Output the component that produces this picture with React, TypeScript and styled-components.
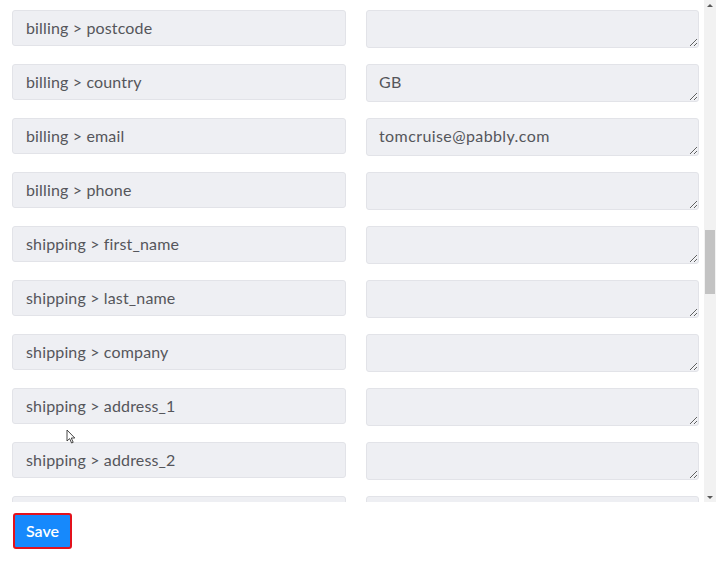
import React, { useEffect, useRef, useState } from "react";
import styled, { createGlobalStyle } from "styled-components";

const GlobalStyle = createGlobalStyle`
  html, body {
    margin: 0;
    padding: 0;
    background: #ffffff;
    font-family: Lato, "Open Sans", "Liberation Sans", sans-serif;
  }
`;

const Page = styled.div`
  position: relative;
  width: 726px;
  height: 577px;
  background: #ffffff;
`;

const ListFrame = styled.div`
  display: flex;
  width: 716px;
  height: 502px;
`;

const ScrollArea = styled.div`
  width: 704px;
  height: 100%;
  overflow: hidden;
`;

const ScrollBar = styled.div`
  width: 12px;
  display: flex;
  flex-direction: column;
  background: #f2f2f2;
`;

const ScrollArrow = styled.div<{ $down?: boolean }>`
  height: 10px;
  display: flex;
  align-items: center;
  justify-content: center;

  &::after {
    content: "";
    width: 0;
    height: 0;
    border-left: 3px solid transparent;
    border-right: 3px solid transparent;
    ${(p) =>
      p.$down ? "border-top: 3px solid #5a5a5a;" : "border-bottom: 3px solid #5a5a5a;"}
  }
`;

const ScrollTrack = styled.div`
  position: relative;
  flex: 1;
`;

const ScrollThumb = styled.div`
  position: absolute;
  left: 1px;
  right: 1px;
  background: #c3c3c3;
`;

const FieldGrid = styled.div`
  display: grid;
  grid-template-columns: 334px 333px;
  column-gap: 20px;
  row-gap: 16px;
  padding: 10px 5px 10px 12px;
  align-items: start;
`;

const KeyBox = styled.div`
  box-sizing: border-box;
  height: 36px;
  padding: 0 13px 1px;
  display: flex;
  align-items: center;
  background: #eeeff3;
  border: 1px solid #e2e3e8;
  border-radius: 3px;
  color: #55565b;
  font-size: 16px;
  letter-spacing: 0.15px;
  white-space: nowrap;
  overflow: hidden;
`;

const ValueArea = styled.textarea`
  box-sizing: border-box;
  display: block;
  width: 333px;
  height: 38px;
  min-height: 38px;
  margin: 0;
  padding: 5px 12px 7px;
  background: #eeeff3;
  border: 1px solid #e2e3e8;
  border-radius: 3px;
  color: #55565b;
  font-family: Lato, "Open Sans", "Liberation Sans", sans-serif;
  font-size: 16px;
  letter-spacing: 0.4px;
  line-height: 24px;
  resize: vertical;
  overflow: hidden;
  outline: none;
`;

const Footer = styled.div`
  display: flex;
  padding: 11px 0 0 13px;
`;

const SaveButton = styled.button`
  box-sizing: border-box;
  height: 36px;
  padding: 0 11px 2px;
  background: #1689fc;
  border: 2px solid #e3121c;
  border-radius: 3px;
  color: #ffffff;
  font-family: Lato, "Open Sans", "Liberation Sans", sans-serif;
  font-size: 16px;
  font-weight: 600;
  cursor: pointer;
`;

const Cursor = styled.svg`
  position: absolute;
  left: 66px;
  top: 429px;
  pointer-events: none;
`;

const fields: [string, string][] = [
  ["id", "1523"],
  ["parent_id", "0"],
  ["number", "1523"],
  ["order_key", ""],
  ["created_via", "checkout"],
  ["version", ""],
  ["status", "processing"],
  ["currency", "GBP"],
  ["date_created", ""],
  ["date_created_gmt", ""],
  ["date_modified", ""],
  ["date_modified_gmt", ""],
  ["discount_total", "0.00"],
  ["discount_tax", "0.00"],
  ["shipping_total", "0.00"],
  ["shipping_tax", "0.00"],
  ["cart_tax", "0.00"],
  ["total", ""],
  ["total_tax", "0.00"],
  ["prices_include_tax", ""],
  ["customer_id", ""],
  ["customer_ip_address", ""],
  ["customer_user_agent", ""],
  ["customer_note", ""],
  ["cart_hash", ""],
  ["billing > first_name", "Tom"],
  ["billing > last_name", "Cruise"],
  ["billing > company", ""],
  ["billing > address_1", ""],
  ["billing > address_2", ""],
  ["billing > city", ""],
  ["billing > state", ""],
  ["billing > postcode", ""],
  ["billing > country", "GB"],
  ["billing > email", "tomcruise@pabbly.com"],
  ["billing > phone", ""],
  ["shipping > first_name", ""],
  ["shipping > last_name", ""],
  ["shipping > company", ""],
  ["shipping > address_1", ""],
  ["shipping > address_2", ""],
  ["shipping > city", ""],
  ["shipping > state", ""],
  ["shipping > postcode", ""],
  ["shipping > country", ""],
  ["payment_method", ""],
  ["payment_method_title", ""],
  ["transaction_id", ""],
  ["date_paid", ""],
  ["date_paid_gmt", ""],
  ["date_completed", ""],
  ["date_completed_gmt", ""],
  ["line_items > 0 > id", ""],
  ["line_items > 0 > name", ""],
  ["line_items > 0 > product_id", ""],
  ["line_items > 0 > variation_id", ""],
  ["line_items > 0 > quantity", ""],
  ["line_items > 0 > tax_class", ""],
  ["line_items > 0 > subtotal", ""],
  ["line_items > 0 > subtotal_tax", ""],
  ["line_items > 0 > total", ""],
  ["line_items > 0 > total_tax", ""],
  ["line_items > 0 > sku", ""],
  ["line_items > 0 > price", ""],
  ["shipping_lines > 0 > method_title", ""],
  ["shipping_lines > 0 > method_id", ""],
  ["shipping_lines > 0 > total", ""],
  ["currency_symbol", ""],
  ["_links > self > href", ""],
  ["_links > collection > href", ""],
];

const TRACK = 482;

const App = () => {
  const scrollRef = useRef<HTMLDivElement>(null);
  const [thumb, setThumb] = useState({ top: 0, height: TRACK });

  useEffect(() => {
    const el = scrollRef.current;
    if (!el) return;
    // keep "billing > postcode" as the first visible row
    el.scrollTop = 32 * 54;
    const height = Math.max(20, Math.round((TRACK * el.clientHeight) / el.scrollHeight));
    const top = Math.round(
      (el.scrollTop / (el.scrollHeight - el.clientHeight)) * (TRACK - height)
    );
    setThumb({ top, height });
  }, []);

  return (
    <Page>
      <GlobalStyle />
      <ListFrame>
        <ScrollArea ref={scrollRef}>
          <FieldGrid>
            {fields.map(([key, value]) => (
              <React.Fragment key={key}>
                <KeyBox>{key}</KeyBox>
                <ValueArea rows={1} defaultValue={value} readOnly />
              </React.Fragment>
            ))}
          </FieldGrid>
        </ScrollArea>
        <ScrollBar>
          <ScrollArrow />
          <ScrollTrack>
            <ScrollThumb style={{ top: thumb.top, height: thumb.height }} />
          </ScrollTrack>
          <ScrollArrow $down />
        </ScrollBar>
      </ListFrame>
      <Footer>
        <SaveButton>Save</SaveButton>
      </Footer>
      <Cursor width="10" height="15" viewBox="0 0 10 15">
        <path d="M1 1 L1 12 L3.6 9.6 L5.6 14 L7.2 13.3 L5.3 9 L8.8 9 Z" fill="#ffffff" stroke="#333333" strokeWidth="0.9" strokeLinejoin="round" />
      </Cursor>
    </Page>
  );
};

export default App;
